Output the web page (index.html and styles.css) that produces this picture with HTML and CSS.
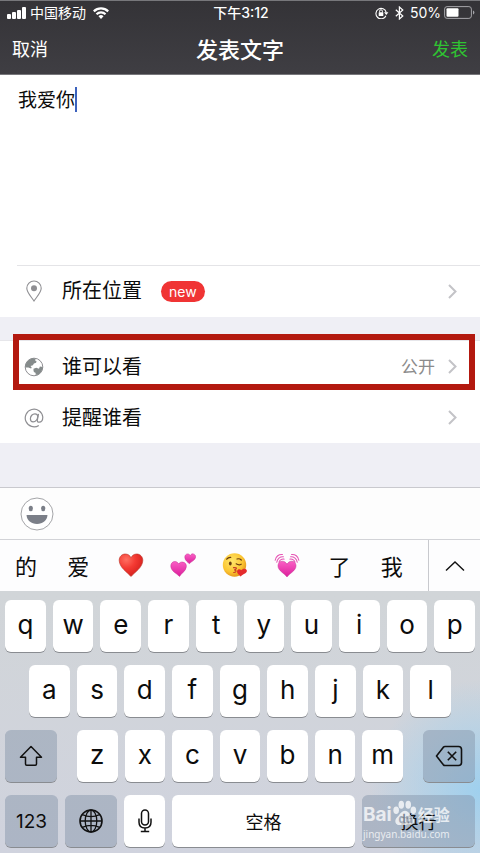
FILE: index.html
```html
<!DOCTYPE html>
<html lang="zh-CN">
<head>
<meta charset="utf-8">
<meta name="viewport" content="width=device-width, initial-scale=1">
<title>发表文字</title>
<link rel="stylesheet" href="styles.css">
</head>
<body>
<div class="app">
  <header class="top">
    <div class="status">
      <div class="status-side">
        <svg width="19" height="12" viewBox="0 0 19 12" fill="#fff" aria-hidden="true"><rect x="0" y="7" width="4" height="5" rx="1"/><rect x="5" y="5" width="4" height="7" rx="1"/><rect x="10" y="3" width="4" height="9" rx="1"/><rect x="15" y="0" width="4" height="12" rx="1"/></svg>
        <span class="carrier">中国移动</span>
        <svg class="wifi" width="16" height="12" viewBox="0 0 16 12" aria-hidden="true"><g fill="none" stroke="#fff" stroke-width="2.2"><path d="M.8 4.4a10.2 10.2 0 0 1 14.4 0"/><path d="M3.5 7.2a6.4 6.4 0 0 1 9 0"/></g><path d="M8 12 5.5 9.3a3.6 3.6 0 0 1 5 0z" fill="#fff"/></svg>
      </div>
      <span class="clock">下午3:12</span>
      <div class="status-side status-right">
        <svg width="14" height="12" viewBox="0 0 14 12" fill="none" stroke="#fff" aria-hidden="true"><path d="M10.9 8.7A5.2 5.2 0 1 1 11.2 5.4" stroke-width="1.1"/><path d="M9 5.2h4.4L11.3 8z" fill="#fff" stroke="none"/><rect x="3.7" y="5.2" width="4.6" height="3.7" rx=".5" fill="#fff" stroke="none"/><path d="M4.6 5.4V4.2a1.4 1.4 0 0 1 2.8 0v1.2"/></svg>
        <svg class="bluetooth" width="9" height="14" viewBox="0 0 9 14" fill="none" stroke="#fff" stroke-width="1.2" aria-hidden="true"><path d="M.8 3.7 7.8 10 4.4 13V1l3.4 3-7 6.3"/></svg>
        <span class="percent">50%</span>
        <svg width="31" height="13" viewBox="0 0 31 13" aria-hidden="true"><rect x=".6" y=".6" width="26.8" height="11.8" rx="2.5" fill="none" stroke="#a5a5a9" stroke-width="1"/><rect x="2.5" y="2.2" width="12" height="8.6" rx="1" fill="#fff"/><path d="M29 4.4q1.4.6 1.4 2.1T29 8.6z" fill="#a5a5a9"/></svg>
      </div>
    </div>
    <nav class="nav">
      <button class="nav-btn" type="button">取消</button>
      <h1>发表文字</h1>
      <button class="nav-btn publish" type="button">发表</button>
    </nav>
  </header>

  <main>
    <div class="editor">
      <textarea aria-label="正文" spellcheck="false">我爱你</textarea>
      <span class="caret"></span>
    </div>
    <ul class="rows">
      <li><a href="#location" class="row first">
        <svg class="row-icon" viewBox="0 0 20 22" fill="none" stroke="#8e8e92" stroke-width="1.1" aria-hidden="true"><path d="M10 21C7.500 17 2.800 12.500 2.800 8.200a7.200 7.200 0 0 1 14.400 0C17.200 12.500 12.500 17 10 21z"/><circle cx="10" cy="8.200" r="3" fill="#8e8e92" stroke="none"/></svg>
        <span>所在位置</span><span class="badge">new</span>
        <svg class="chevron" viewBox="0 0 9 15" aria-hidden="true"><path d="m1 1 6.500 6.500L1 14"/></svg>
      </a></li>
    </ul>
    <ul class="rows second">
      <li><a href="#visibility" class="row marked">
        <svg class="row-icon" viewBox="0 0 20 22" aria-hidden="true"><circle cx="10" cy="11" r="8.800" fill="#fff" stroke="#8e8e92"/><path d="M1.300 11.500C1 7 4.500 2.500 9.600 2.200l2 .8-.6 1.600 1.500.4-.4 1.800-2.200.6-1 1.900-2.400.6 1.200 1.500-.6 1.200-2.700-1z" fill="#858b8b"/><path d="m9.500 12.700 2.800-.9 2.700 1 .9-2.200 2.800.4c-.1 3.500-2.400 6.800-5.400 8l-2-.4.5-1.700-1.900-.8-.4-1.600z" fill="#858b8b"/></svg>
        <span>谁可以看</span><span class="value">公开</span>
        <svg class="chevron" viewBox="0 0 9 15" aria-hidden="true"><path d="m1 1 6.500 6.500L1 14"/></svg>
      </a></li>
      <li><a href="#mention" class="row">
        <svg class="row-icon" viewBox="0 0 20 22" fill="none" stroke="#8e8e92" stroke-width="1.200" aria-hidden="true"><path d="M14.800 18.400A8.800 8.800 0 1 1 18.800 10c0 3.200-1.700 5.200-3.700 5.200-1.500 0-2-.9-1.700-2.300l1.100-6"/><path d="M13.800 9.500c-.2-1.700-1.200-2.700-2.800-2.700-2.600 0-4.600 2.300-4.600 4.900 0 1.900 1 3.100 2.700 3.100 2.400 0 4.300-2.400 4.700-5.300z"/></svg>
        <span>提醒谁看</span>
        <svg class="chevron" viewBox="0 0 9 15" aria-hidden="true"><path d="m1 1 6.500 6.500L1 14"/></svg>
      </a></li>
    </ul>
  </main>

  <section class="input-area">
    <div class="toolbar">
      <button type="button" aria-label="表情">
        <svg width="34" height="34" viewBox="0 0 34 34" aria-hidden="true"><circle cx="17" cy="17" r="16" fill="#fff" stroke="#a4a5a8"/><ellipse cx="10.800" cy="11.500" rx="2.100" ry="2.700" fill="#7b7f88"/><ellipse cx="23.200" cy="11.500" rx="2.100" ry="2.700" fill="#7b7f88"/><path d="M6.500 18h21c-.4 5.300-4.700 9-10.500 9S6.900 23.300 6.500 18z" fill="#7b7f88"/></svg>
      </button>
    </div>
    <div class="candidates">
      <div class="candidate-list">
        <button type="button">的</button>
        <button type="button">爱</button>
        <button type="button" aria-label="红心"><svg width="26" height="26" viewBox="0 0 26 26"><defs><radialGradient id="red" cx=".3" cy=".25" r=".85"><stop offset="0" stop-color="#ff7062"/><stop offset=".45" stop-color="#f43a33"/><stop offset="1" stop-color="#cf1c1a"/></radialGradient></defs><path d="M13 24.500C9.500 20.500 1.200 15.500 1.200 8.300 1.200 4.500 4 2 7.300 2 10 2 12 3.500 13 5.700 14 3.500 16 2 18.700 2 22 2 24.800 4.500 24.800 8.300c0 7.200-8.300 12.200-11.800 16.200z" fill="url(#red)" stroke="#b93025" stroke-width=".6"/></svg></button>
        <button type="button" aria-label="两颗心"><svg width="26" height="26" viewBox="0 0 26 26"><defs><linearGradient id="pink" x1="0" y1="0" x2="0" y2="1"><stop offset="0" stop-color="#fa5fc5"/><stop offset="1" stop-color="#dc1d9b"/></linearGradient></defs><g fill="url(#pink)" stroke="#c32c91" stroke-width=".5"><path d="M9.500 24.500C7 21.500 1 19.500.8 14 .8 11.300 2.600 9.500 4.900 9.500c1.800 0 3 1 3.700 2.500 1-1.500 2.400-2.200 4.200-1.900 2.400.4 3.900 2.300 3.500 4.800-.6 4.400-5 6.300-6.800 9.600z"/><path d="M19.300 11.800c-1.700-2-4.300-3.200-4.500-6.500-.1-1.800 1.100-3.300 2.800-3.400 1.200 0 2.100.6 2.700 1.600.6-1.100 1.600-1.800 2.900-1.600 1.700.2 2.600 1.700 2.400 3.400-.4 3.200-4.600 4.200-6.300 6.500z"/></g></svg></button>
        <button type="button" aria-label="飞吻"><svg width="26" height="26" viewBox="0 0 26 26"><defs><radialGradient id="face" cx=".4" cy=".35" r=".65"><stop offset="0" stop-color="#ffe76b"/><stop offset=".7" stop-color="#fbc431"/><stop offset="1" stop-color="#e69a20"/></radialGradient></defs><circle cx="12.500" cy="13" r="11.700" fill="url(#face)"/><ellipse cx="8.300" cy="11.500" rx="1.400" ry="2" fill="#693b10"/><g fill="none" stroke="#693b10" stroke-width="1.200" stroke-linecap="round"><path d="M4.700 7.200q1.500-2 4-1.800M15 7q2.500-.8 4.300 1M14.200 11.800q2.800 1.800 5 .4"/><path d="M11.500 15.600q3.500-.3 2.700 1.200-.5.900-2 1 2.200.2 1.700 1.700-.4 1-2.200 1" stroke="#c73c27"/></g><path d="M18.700 24.500c-1.500-1.700-3.900-3-3.600-5.500.5-2.200 3.100-2.500 4.100-.7 1.300-1.900 4.300-2.400 5.500-.2 1.200 3-3.600 4-6 6.400z" fill="#e42b2d"/></svg></button>
        <button type="button" aria-label="跳动的心"><svg width="26" height="26" viewBox="0 0 26 26"><path d="M13 25C10.800 21.500 4 19 4 13.700 4 11 5.900 9.200 8.200 9.200c2.200 0 3.800 1.200 4.800 3.100 1-1.900 2.600-3.100 4.800-3.100 2.300 0 4.200 1.800 4.200 4.500C22 19 15.200 21.500 13 25z" fill="url(#pink)" stroke="#c32c91" stroke-width=".5"/><g fill="none" stroke="#e654b4" stroke-width="1.100" stroke-linecap="round"><path d="M1.200 8.200C1.700 4.500 5 2 8.500 2.500M2.800 10.200C3.200 6.800 6 4.500 9.400 4.800M5 10.300c.7-2 2.700-3.400 5-3.200M24.800 8.200C24.300 4.500 21 2 17.500 2.500M23.200 10.200c-.4-3.400-3.200-5.700-6.600-5.400M21 10.300c-.7-2-2.700-3.400-5-3.200"/></g></svg></button>
        <button type="button">了</button>
        <button type="button">我</button>
      </div>
      <button class="expand" type="button" aria-label="展开"><svg width="20" height="12" viewBox="0 0 20 12" fill="none" stroke="#111" stroke-width="1.400"><path d="m1 10.500 9-8.500 9 8.500"/></svg></button>
    </div>
    <div class="keyboard">
      <div class="keys letters">
        <button type="button">q</button><button type="button">w</button><button type="button">e</button><button type="button">r</button><button type="button">t</button><button type="button">y</button><button type="button">u</button><button type="button">i</button><button type="button">o</button><button type="button">p</button>
      </div>
      <div class="keys letters middle">
        <button type="button">a</button><button type="button">s</button><button type="button">d</button><button type="button">f</button><button type="button">g</button><button type="button">h</button><button type="button">j</button><button type="button">k</button><button type="button">l</button>
      </div>
      <div class="keys third">
        <button class="dark" type="button" aria-label="大写"><svg width="24" height="22" viewBox="0 0 24 22" fill="none" stroke="#111" stroke-width="1.500" stroke-linejoin="round"><path d="M12 1.500 1.500 12.200h5V19q0 1.200 1.200 1.200h8.600q1.200 0 1.200-1.200v-6.800h5z"/></svg></button>
        <div class="keys letters">
          <button type="button">z</button><button type="button">x</button><button type="button">c</button><button type="button">v</button><button type="button">b</button><button type="button">n</button><button type="button">m</button>
        </div>
        <button class="dark" type="button" aria-label="删除"><svg width="28" height="22" viewBox="0 0 28 22" fill="none" stroke="#111" stroke-width="1.600" stroke-linejoin="round"><path d="M10 1.500h13.500q3 0 3 3v13q0 3-3 3H10q-1 0-1.800-.9L1.500 11l6.700-8.600q.8-.9 1.800-.9z"/><path d="m12.800 6.800 8.400 8.400m0-8.400-8.400 8.400"/></svg></button>
      </div>
      <div class="keys bottom">
        <button class="dark digits" type="button">123</button>
        <button class="dark" type="button" aria-label="切换键盘"><svg width="24" height="24" viewBox="0 0 24 24" fill="none" stroke="#111" stroke-width="1.300"><circle cx="12" cy="12" r="11" stroke-width="1.600"/><ellipse cx="12" cy="12" rx="5.800" ry="11"/><path d="M12 1v22M1 12h22M3.300 5.700q8.700 4 17.400 0M3.300 18.300q8.700-4 17.400 0"/></svg></button>
        <button type="button" aria-label="语音"><svg width="14" height="24" viewBox="0 0 14 24" fill="none" stroke="#111" stroke-width="1.500"><rect x="3.500" y="1" width="7" height="15" rx="3.500"/><path d="M1 9.500v3.800c0 3.500 2.400 5.700 6 5.700s6-2.200 6-5.700V9.500M7 19v3.500M2.800 22.600h8.400"/></svg></button>
        <button type="button">空格</button>
        <div class="return">
          <button class="dark" type="button">换行</button>
          <div class="watermark">
            <div class="brand"><span class="bai">Bai</span><svg width="26" height="28" viewBox="0 0 28 28" fill="#fff" aria-hidden="true"><ellipse cx="4.500" cy="11" rx="3" ry="4"/><ellipse cx="10" cy="5" rx="3" ry="4.300"/><ellipse cx="17.500" cy="5" rx="3" ry="4.300"/><ellipse cx="23" cy="11" rx="3" ry="4"/><path d="M14 11.500c4 0 5 4.300 8 7 3.500 3.300 2 8.500-2.500 8.500H8c-4.500 0-6-5.200-2.500-8.500 3-2.700 4.500-7 8.500-7z"/><text x="7" y="25" class="du">du</text></svg><span class="jingyan">经验</span></div>
            <div class="site">jingyan.baidu.com</div>
          </div>
        </div>
      </div>
    </div>
  </section>
</div>
</body>
</html>
```
FILE: styles.css
```css
* { box-sizing: border-box; }

body {
  margin: 0;
  background: #efeff5;
  color: #0c0c0c;
  font-family: Inter, "Noto Sans CJK SC", sans-serif;
}

button {
  margin: 0;
  padding: 0;
  border: 0;
  background: none;
  color: inherit;
  font: inherit;
}

svg { display: block; flex: none; }

.app {
  display: flex;
  flex-direction: column;
  min-height: 100vh;
}

.top {
  border-top: 1px solid #77777b;
  border-bottom: 1px solid #77777b;
  background: linear-gradient(#343337, #3f3e43);
  color: #fff;
}

.status {
  display: grid;
  grid-template-columns: 1fr auto 1fr;
  align-items: center;
  height: 23px;
  padding: 0 5px 0 7px;
  font-size: 14px;
  line-height: 20px;
}

.status-side { display: flex; align-items: center; }
.status-right { justify-content: flex-end; }
.carrier { margin-left: 4px; }
.wifi { margin-left: 7px; }
.bluetooth { margin-left: 6px; }
.percent { margin: 0 3px 0 6px; }
.clock { font-weight: 500; }

.nav {
  display: grid;
  grid-template-columns: 1fr auto 1fr;
  align-items: center;
  height: 50px;
  padding: 2px 12px 0;
}

.nav h1 { margin: 0; font-size: 22px; font-weight: 500; line-height: 32px; }
.nav-btn { justify-self: start; font-size: 18px; line-height: 28px; }
.publish { justify-self: end; color: #2fc332; }

.editor { position: relative; background: #fff; }

.editor textarea {
  display: block;
  width: 100%;
  height: 190px;
  padding: 12px 18px;
  border: 0;
  outline: 0;
  resize: none;
  background: none;
  color: inherit;
  font: inherit;
  font-size: 19px;
  line-height: 28px;
}

.caret {
  position: absolute;
  top: 12px;
  left: 75px;
  width: 2px;
  height: 25px;
  background: #3c62bd;
}

.rows { margin: 0; padding: 0; list-style: none; background: #fff; }
.second { margin-top: 23px; border-top: 1px solid #e6e6ea; }

.row {
  position: relative;
  display: flex;
  align-items: center;
  height: 52px;
  padding: 0 23px 0 24px;
  color: inherit;
  font-size: 20px;
  line-height: 30px;
  text-decoration: none;
}

.second .row { height: 51px; }

.first::before {
  content: "";
  position: absolute;
  top: 0;
  right: 0;
  left: 17px;
  border-top: 1px solid #e4e4e7;
}

.marked::after {
  content: "";
  position: absolute;
  inset: -7px 5px 2px 13px;
  border: 6px solid #b3190f;
}

.row-icon { width: 20px; height: 22px; margin-right: 18px; }

.badge {
  margin-left: 19px;
  padding: 0 8px;
  border-radius: 11px;
  background: #f03434;
  color: #fff;
  font-size: 14px;
  line-height: 21px;
}

.value { margin-left: auto; color: #8b8b8b; font-size: 17px; }
.chevron { width: 9px; height: 15px; margin-left: auto; fill: none; stroke: #c3c3c7; stroke-width: 2; }
.value + .chevron { margin-left: 13px; }

.input-area { margin-top: auto; }

.toolbar {
  display: flex;
  align-items: center;
  height: 52px;
  padding: 0 20px;
  border-top: 1px solid #c9c9ce;
  background: #fdfdfd;
}

.candidates {
  display: flex;
  height: 52px;
  border-top: 1px solid #d2d3d7;
  background: #fdfdfe;
}

.candidate-list {
  display: grid;
  flex: 1;
  grid-template-columns: repeat(8, 1fr);
  padding: 0 10px 2px 0;
  font-size: 22px;
}

.candidates button { display: grid; place-items: center; }
.candidates .expand { width: 52px; border-left: 1px solid #c8c9ce; }

.keyboard {
  display: grid;
  gap: 13px;
  padding: 9px 5px 6px;
  background:
    radial-gradient(circle at 100% 76%, #9fd0ee, transparent 110px),
    linear-gradient(#d1d5d8, #d0d3de);
}

.keys { display: grid; gap: 7px; }

.keys button {
  display: grid;
  place-items: center;
  min-width: 0;
  height: 52px;
  border-radius: 6px;
  background: #fff;
  box-shadow: 0 1px 0 #898c91;
  font-size: 18px;
}

.keys .dark { background: rgba(130, 145, 168, 0.46); }
.letters { grid-auto-flow: column; grid-auto-columns: 1fr; }
.keys.letters button { padding-bottom: 3px; font-size: 26px; }
.middle { padding: 0 24px; }
.third { grid-template-columns: 52fr 326fr 52fr; gap: 20px; }
.bottom { grid-template-columns: 53fr 52fr 41fr 183fr 113fr; }
.keys .digits { font-size: 19px; }

.return { position: relative; }
.return button { width: 100%; }

.watermark {
  position: absolute;
  top: 4px;
  left: 1px;
  color: #fff;
  opacity: 0.75;
  pointer-events: none;
}

.brand { display: flex; align-items: flex-end; height: 28px; font-weight: 700; line-height: 24px; }
.bai { font-size: 19px; }
.jingyan { font-size: 16px; }
.du { fill: #9aa8ba; font-size: 12px; }
.site { font-family: "Noto Sans", sans-serif; font-size: 10px; line-height: 14px; }
```
